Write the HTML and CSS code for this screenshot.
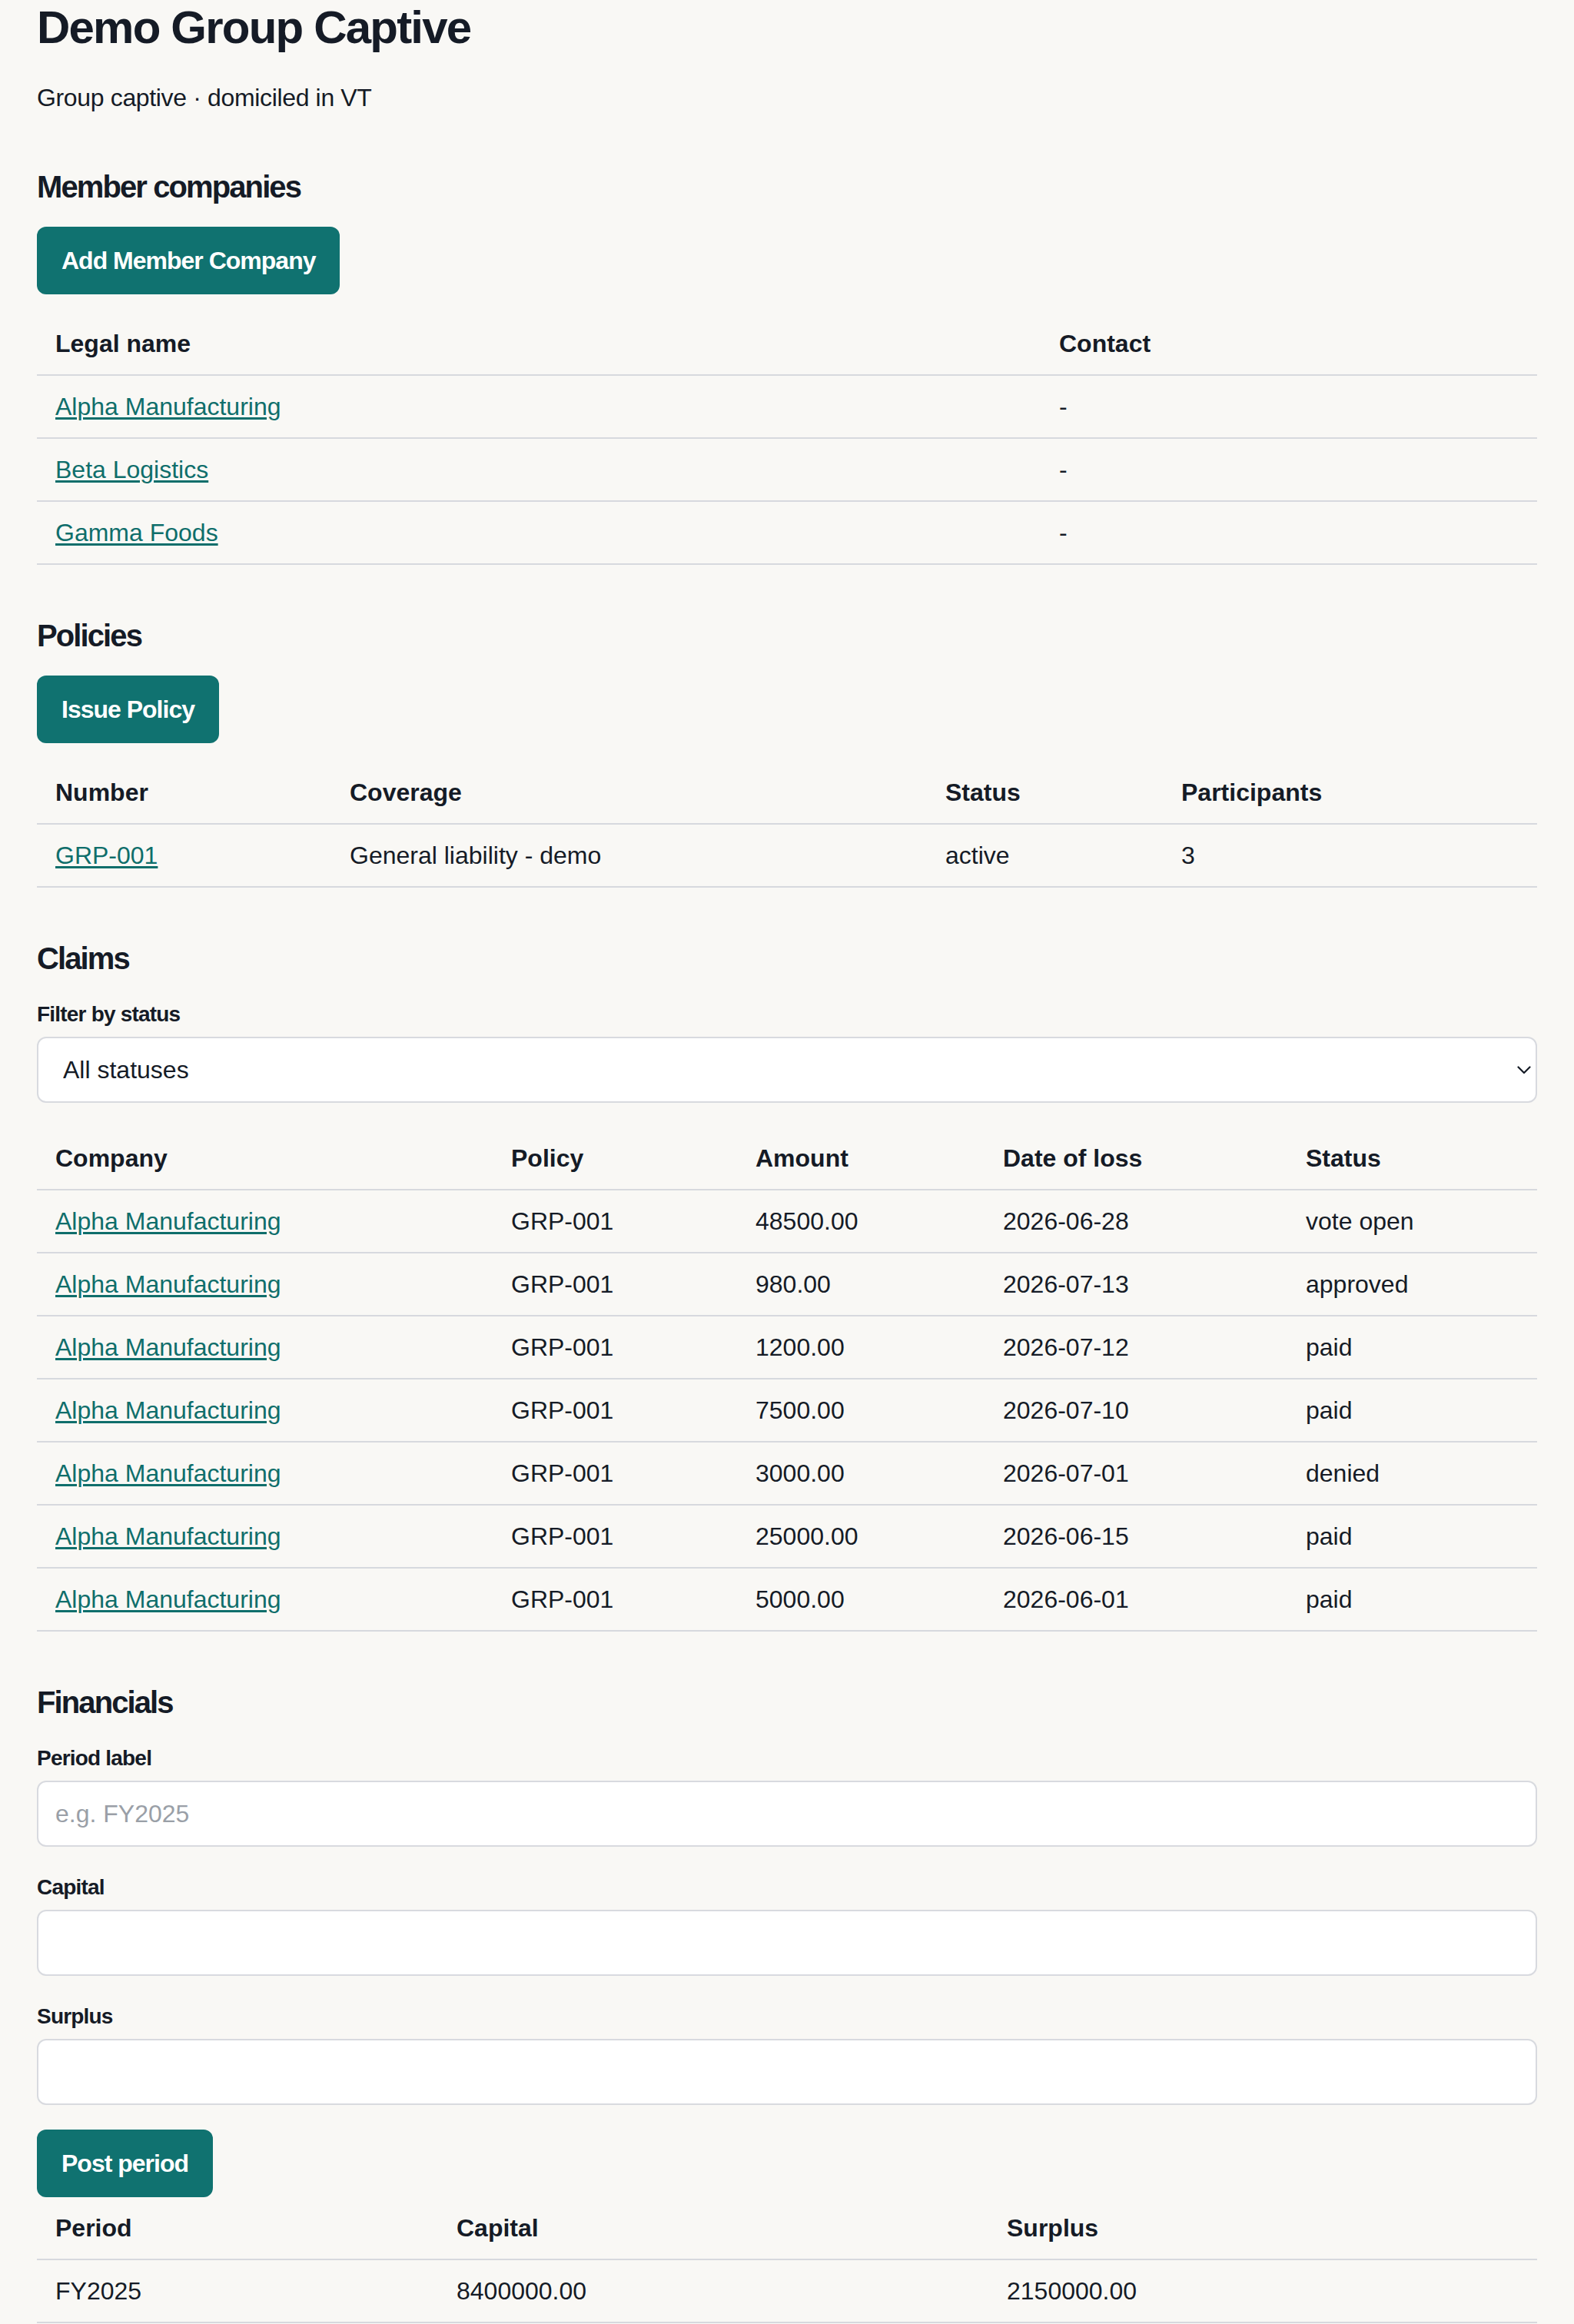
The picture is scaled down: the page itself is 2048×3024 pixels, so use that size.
FILE: index.html
```html
<!DOCTYPE html>
<html lang="en">
<head>
  <meta charset="UTF-8">
  <meta name="viewport" content="width=device-width, initial-scale=1.0">
  <title>Demo Group Captive</title>
  <link rel="stylesheet" href="styles.css">
</head>
<body>
  <h1>Demo Group Captive</h1>
  <p class="subtitle">Group captive · domiciled in VT</p>

  <section>
    <h2>Member companies</h2>
    <div class="actions">
      <button class="btn">Add Member Company</button>
    </div>
    <table class="spaced">
      <thead>
        <tr>
          <th class="w-legal">Legal name</th>
          <th>Contact</th>
        </tr>
      </thead>
      <tbody>
        <tr><td><a href="#">Alpha Manufacturing</a></td><td>-</td></tr>
        <tr><td><a href="#">Beta Logistics</a></td><td>-</td></tr>
        <tr><td><a href="#">Gamma Foods</a></td><td>-</td></tr>
      </tbody>
    </table>
  </section>

  <section>
    <h2>Policies</h2>
    <div class="actions">
      <button class="btn">Issue Policy</button>
    </div>
    <table class="spaced">
      <thead>
        <tr>
          <th class="w-number">Number</th>
          <th class="w-coverage">Coverage</th>
          <th class="w-pstatus">Status</th>
          <th>Participants</th>
        </tr>
      </thead>
      <tbody>
        <tr>
          <td><a href="#">GRP-001</a></td>
          <td>General liability - demo</td>
          <td>active</td>
          <td>3</td>
        </tr>
      </tbody>
    </table>
  </section>

  <section>
    <h2>Claims</h2>
    <div class="field">
      <label for="statusFilter">Filter by status</label>
      <div class="select-wrap">
        <select id="statusFilter">
          <option>All statuses</option>
          <option>vote open</option>
          <option>approved</option>
          <option>paid</option>
          <option>denied</option>
        </select>
        <svg class="chevron" width="18" height="11" viewBox="0 0 18 11" aria-hidden="true">
          <polyline points="1.5,1.5 9,9 16.5,1.5" fill="none" stroke="#151b26" stroke-width="2.2" stroke-linecap="round" stroke-linejoin="round"/>
        </svg>
      </div>
    </div>
    <table>
      <thead>
        <tr>
          <th class="w-company">Company</th>
          <th class="w-policy">Policy</th>
          <th class="w-amount">Amount</th>
          <th class="w-date">Date of loss</th>
          <th>Status</th>
        </tr>
      </thead>
      <tbody>
        <tr><td><a href="#">Alpha Manufacturing</a></td><td>GRP-001</td><td>48500.00</td><td>2026-06-28</td><td>vote open</td></tr>
        <tr><td><a href="#">Alpha Manufacturing</a></td><td>GRP-001</td><td>980.00</td><td>2026-07-13</td><td>approved</td></tr>
        <tr><td><a href="#">Alpha Manufacturing</a></td><td>GRP-001</td><td>1200.00</td><td>2026-07-12</td><td>paid</td></tr>
        <tr><td><a href="#">Alpha Manufacturing</a></td><td>GRP-001</td><td>7500.00</td><td>2026-07-10</td><td>paid</td></tr>
        <tr><td><a href="#">Alpha Manufacturing</a></td><td>GRP-001</td><td>3000.00</td><td>2026-07-01</td><td>denied</td></tr>
        <tr><td><a href="#">Alpha Manufacturing</a></td><td>GRP-001</td><td>25000.00</td><td>2026-06-15</td><td>paid</td></tr>
        <tr><td><a href="#">Alpha Manufacturing</a></td><td>GRP-001</td><td>5000.00</td><td>2026-06-01</td><td>paid</td></tr>
      </tbody>
    </table>
  </section>

  <section>
    <h2>Financials</h2>
    <form class="period-form" onsubmit="return false">
      <div class="field">
        <label for="periodLabel">Period label</label>
        <input type="text" id="periodLabel" placeholder="e.g. FY2025">
      </div>
      <div class="field">
        <label for="capital">Capital</label>
        <input type="text" id="capital">
      </div>
      <div class="field">
        <label for="surplus">Surplus</label>
        <input type="text" id="surplus">
      </div>
      <div class="actions">
        <button class="btn" type="submit">Post period</button>
      </div>
    </form>
    <table>
      <thead>
        <tr>
          <th class="w-period">Period</th>
          <th class="w-capital">Capital</th>
          <th>Surplus</th>
        </tr>
      </thead>
      <tbody>
        <tr><td>FY2025</td><td>8400000.00</td><td>2150000.00</td></tr>
      </tbody>
    </table>
  </section>
</body>
</html>
```

FILE: styles.css
```css
* {
  box-sizing: border-box;
}
body {
  margin: 0;
  padding: 0 48px;
  background: #f9f8f5;
  color: #151b26;
  font-family: "Liberation Sans", Arial, sans-serif;
  font-size: 32px;
  line-height: 1.5;
}
h1 {
  margin: 0;
  font-size: 60px;
  line-height: 72px;
  font-weight: 700;
  letter-spacing: -1.8px;
}
.subtitle {
  margin: 31px 0 0;
  letter-spacing: -0.35px;
}
h2 {
  margin: 68px 0 28px;
  font-size: 40px;
  line-height: 48px;
  font-weight: 700;
  letter-spacing: -1.9px;
}

/* Buttons */
.actions {
  display: flex;
}
.btn {
  height: 88px;
  padding: 20px 32px;
  border: none;
  border-radius: 12px;
  background: #107270;
  color: #fff;
  font-family: "Liberation Sans", Arial, sans-serif;
  font-size: 32px;
  line-height: 48px;
  font-weight: 700;
  letter-spacing: -1px;
  cursor: pointer;
}
.btn:hover {
  background: #0c5f5d;
}

/* Tables */
table {
  width: 100%;
  border-collapse: collapse;
  table-layout: fixed;
}
table.spaced {
  margin-top: 24px;
}
th, td {
  padding: 16px 24px;
  border-bottom: 2px solid #d7d9de;
  text-align: left;
  line-height: 48px;
  white-space: nowrap;
}
th {
  font-weight: 700;
}
a {
  color: #0f6e6b;
  text-decoration-thickness: 3px;
  text-underline-offset: 3px;
}

.w-legal { width: 1306px; }
.w-number { width: 383px; }
.w-coverage { width: 775px; }
.w-pstatus { width: 307px; }
.w-company { width: 593px; }
.w-policy { width: 318px; }
.w-amount { width: 322px; }
.w-date { width: 394px; }
.w-period { width: 522px; }
.w-capital { width: 716px; }

/* Form fields */
.field {
  margin-bottom: 32px;
}
.field label {
  display: block;
  margin-bottom: 8px;
  font-size: 28px;
  line-height: 42px;
  font-weight: 700;
  letter-spacing: -0.8px;
}
.field input,
.field select {
  display: block;
  width: 100%;
  height: 86px;
  border: 2px solid #d8dadf;
  border-radius: 12px;
  background: #fff;
  color: #151b26;
  font-family: "Liberation Sans", Arial, sans-serif;
  font-size: 32px;
  outline: none;
}
.field input {
  padding: 0 22px;
}
.field input::placeholder {
  color: #9a9fa7;
}
.field select {
  padding: 0 60px 0 32px;
  appearance: none;
  -webkit-appearance: none;
}
.select-wrap {
  position: relative;
}
.chevron {
  position: absolute;
  right: 8px;
  top: 38px;
  pointer-events: none;
}
.period-form {
  margin: 0;
}
```
